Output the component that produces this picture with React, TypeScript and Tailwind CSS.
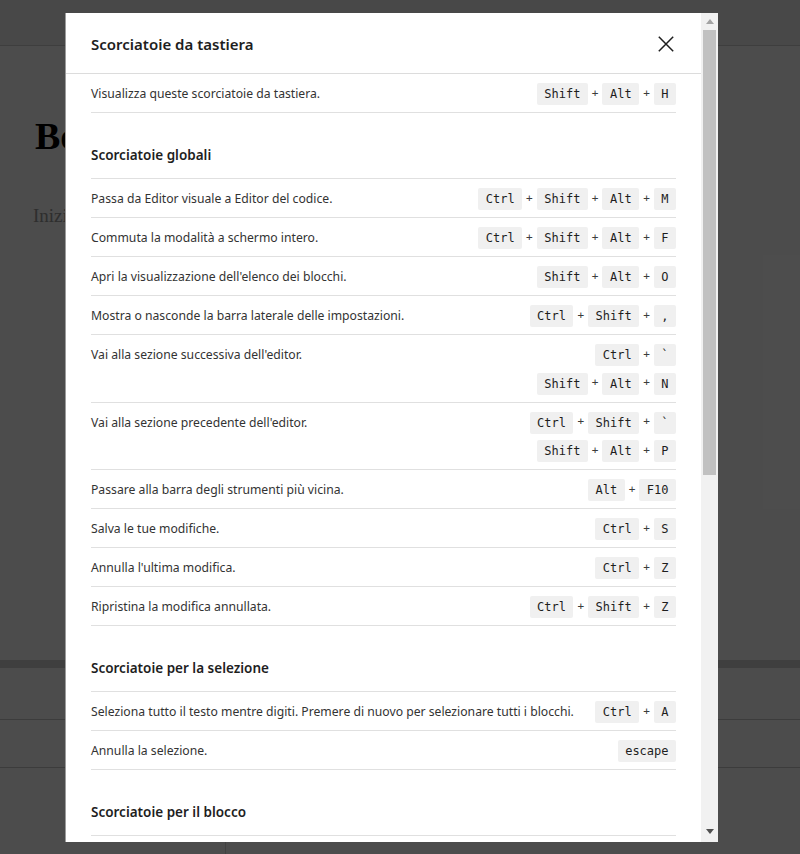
import React from 'react';

type Row = { desc: string; keys: string[][] };
type Section = { title?: string; rows: Row[] };

const sections: Section[] = [
  {
    rows: [{ desc: 'Visualizza queste scorciatoie da tastiera.', keys: [['Shift', 'Alt', 'H']] }],
  },
  {
    title: 'Scorciatoie globali',
    rows: [
      { desc: 'Passa da Editor visuale a Editor del codice.', keys: [['Ctrl', 'Shift', 'Alt', 'M']] },
      { desc: 'Commuta la modalità a schermo intero.', keys: [['Ctrl', 'Shift', 'Alt', 'F']] },
      { desc: "Apri la visualizzazione dell'elenco dei blocchi.", keys: [['Shift', 'Alt', 'O']] },
      { desc: 'Mostra o nasconde la barra laterale delle impostazioni.', keys: [['Ctrl', 'Shift', ',']] },
      {
        desc: "Vai alla sezione successiva dell'editor.",
        keys: [
          ['Ctrl', '`'],
          ['Shift', 'Alt', 'N'],
        ],
      },
      {
        desc: "Vai alla sezione precedente dell'editor.",
        keys: [
          ['Ctrl', 'Shift', '`'],
          ['Shift', 'Alt', 'P'],
        ],
      },
      { desc: 'Passare alla barra degli strumenti più vicina.', keys: [['Alt', 'F10']] },
      { desc: 'Salva le tue modifiche.', keys: [['Ctrl', 'S']] },
      { desc: "Annulla l'ultima modifica.", keys: [['Ctrl', 'Z']] },
      { desc: 'Ripristina la modifica annullata.', keys: [['Ctrl', 'Shift', 'Z']] },
    ],
  },
  {
    title: 'Scorciatoie per la selezione',
    rows: [
      {
        desc: 'Seleziona tutto il testo mentre digiti. Premere di nuovo per selezionare tutti i blocchi.',
        keys: [['Ctrl', 'A']],
      },
      { desc: 'Annulla la selezione.', keys: [['escape']] },
    ],
  },
  {
    title: 'Scorciatoie per il blocco',
    rows: [
      { desc: 'Duplica i blocchi selezionati.', keys: [['Ctrl', 'Shift', 'D']] },
      { desc: 'Rimuovi i blocchi selezionati.', keys: [['Shift', 'Alt', 'Z']] },
    ],
  },
];

function Combo({ keys }: { keys: string[] }) {
  return (
    <div className="flex h-[22px] items-center justify-end">
      {keys.map((k, i) => (
        <React.Fragment key={i}>
          {i > 0 && <span className="mx-[4px] font-['DejaVu_Sans_Mono',monospace] text-[11px] text-[#3c3c3c]">+</span>}
          <kbd className="flex h-[22px] items-center rounded-[2px] bg-[#f0f0f0] px-[7.5px] font-['DejaVu_Sans_Mono',monospace] text-[12px] text-[#1e1e1e]">
            {k}
          </kbd>
        </React.Fragment>
      ))}
    </div>
  );
}

function ShortcutRow({ row }: { row: Row }) {
  return (
    <li className="flex items-start justify-between gap-4 border-b border-[#e0e0e0] pb-[7px] pt-[9px]">
      <span className="whitespace-nowrap leading-[22px]">{row.desc}</span>
      <div className="flex flex-col gap-[6.5px]">
        {row.keys.map((c, i) => (
          <Combo key={i} keys={c} />
        ))}
      </div>
    </li>
  );
}

function EditorBehind() {
  return (
    <div className="flex h-[854px] w-full flex-col bg-white font-['Liberation_Serif',serif]">
      <div className="h-[46px] border-b border-[#d0d0d0] bg-[#f2f2f2]"></div>
      <div className="flex h-[614px] flex-col px-[35px] pt-[68px]">
        <h1 className="whitespace-nowrap text-[38px] font-bold leading-[44px] text-black">Bozza senza titolo</h1>
        <p className="ml-[-2px] mt-[44px] whitespace-nowrap text-[19px] text-[#9a9a9a]">Inizia a scrivere o digita / per scegliere un blocco</p>
      </div>
      <div className="h-[8px] bg-[#d4d4d4]"></div>
      <div className="h-[52px] border-b border-[#c8c8c8]"></div>
      <div className="h-[48px] border-b border-[#c8c8c8]"></div>
      <div className="flex grow">
        <div className="w-[226px] border-r border-[#dadada]"></div>
      </div>
    </div>
  );
}

export default function App() {
  return (
    <div className="relative h-[854px] w-[800px] overflow-hidden">
      <EditorBehind />
      <div className="absolute inset-0 bg-black/70">
        <div className="ml-[65px] mt-[13px] flex h-[829px] w-[653px] border-l border-[#9c9c9c] bg-white font-['Noto_Sans',sans-serif] text-[12.2px] text-[#333333]">
          <div className="flex w-[636px] flex-col overflow-hidden">
            <div className="flex h-[61px] shrink-0 items-center justify-between border-b border-[#dcdcdc] pl-[25px] pr-[27px] pt-[2px]">
              <h2 className="text-[15px] font-semibold text-[#1e1e1e]">Scorciatoie da tastiera</h2>
              <svg width="16" height="16" viewBox="0 0 16 16" className="text-[#1e1e1e]">
                <path d="M0.8 0.8 L15.2 15.2 M15.2 0.8 L0.8 15.2" stroke="currentColor" strokeWidth="1.5" fill="none" />
              </svg>
            </div>
            <div className="flex flex-col px-[25px]">
              {sections.map((s, si) => (
                <section key={si}>
                  {s.title && (
                    <h3 className="pb-[13px] pt-[32px] text-[13.5px] font-semibold leading-[20px] text-[#1e1e1e]">{s.title}</h3>
                  )}
                  <ul className={s.title ? 'border-t border-[#e0e0e0]' : ''}>
                    {s.rows.map((r, ri) => (
                      <ShortcutRow key={ri} row={r} />
                    ))}
                  </ul>
                </section>
              ))}
            </div>
          </div>
          <div className="flex w-[17px] flex-col items-center bg-[#f1f1f1] pb-[2px]">
            <div className="flex h-[17px] w-full items-center justify-center">
              <svg width="8" height="5" viewBox="0 0 8 5">
                <path d="M0 5 L4 0 L8 5 Z" fill="#a3a3a3" />
              </svg>
            </div>
            <div className="h-[445px] w-[13px] bg-[#c1c1c1]"></div>
            <div className="grow"></div>
            <div className="flex h-[17px] w-full items-center justify-center">
              <svg width="8" height="5" viewBox="0 0 8 5">
                <path d="M0 0 L8 0 L4 5 Z" fill="#505050" />
              </svg>
            </div>
          </div>
        </div>
      </div>
    </div>
  );
}
